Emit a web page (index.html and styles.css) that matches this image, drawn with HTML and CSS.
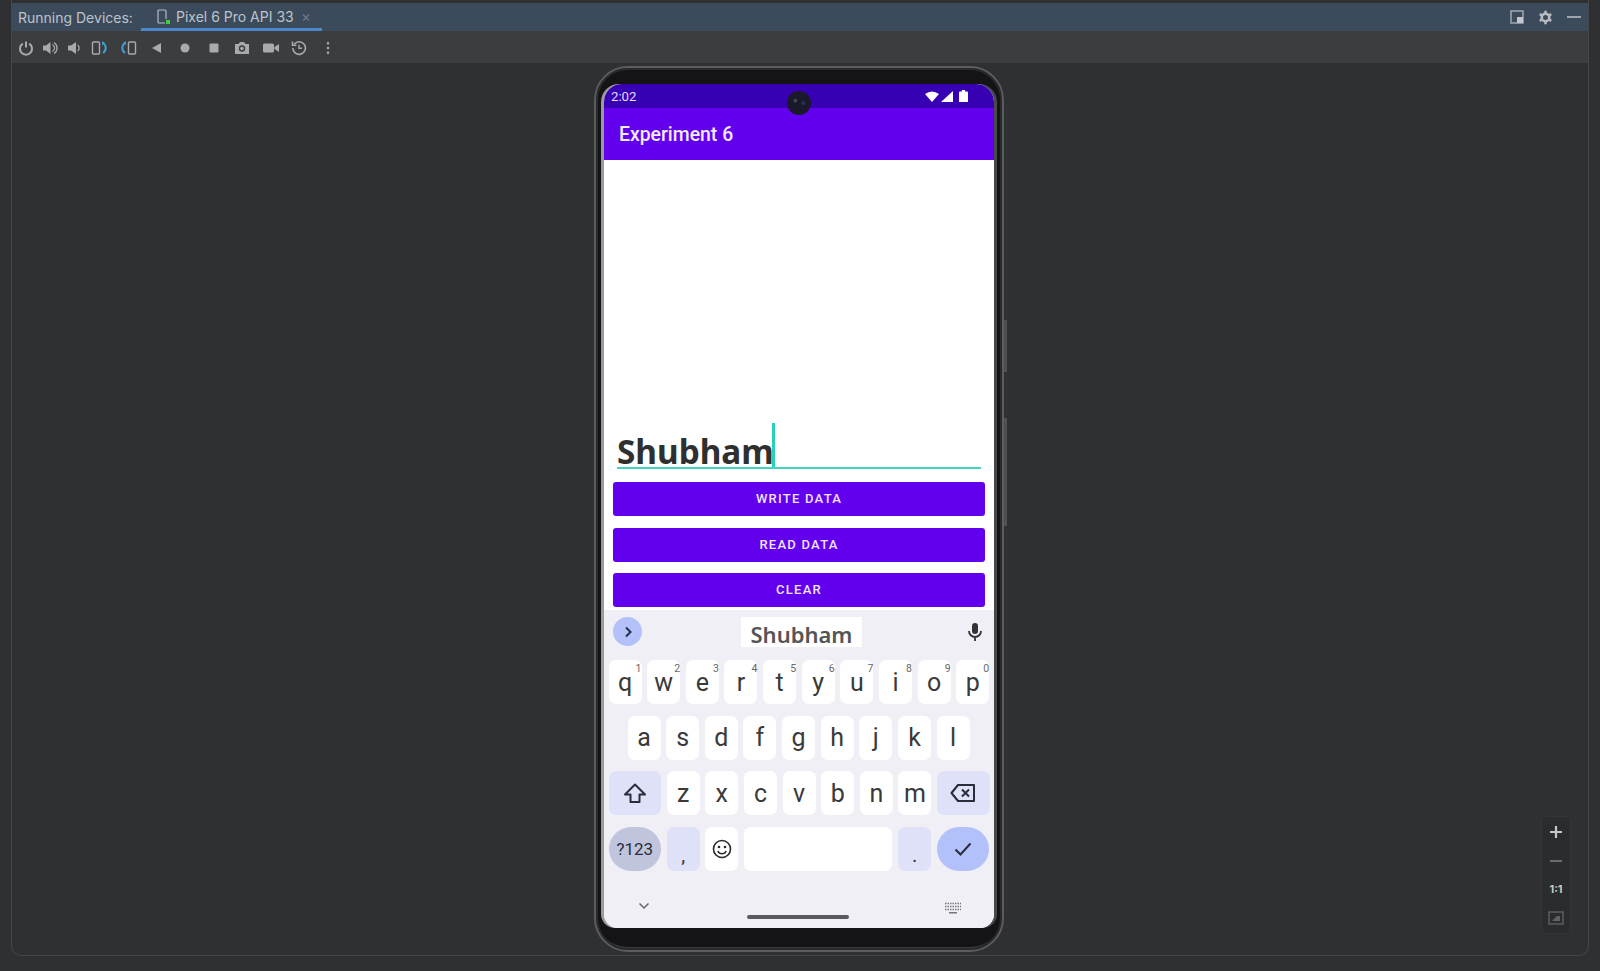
FILE: index.html
```html
<!DOCTYPE html>
<html lang="en">
<head>
  <meta charset="UTF-8">
  <title>Running Devices</title>
  <link rel="stylesheet" href="styles.css">
</head>
<body>

<div class="window">
  <div class="tabbar">
    <span class="tabbar-title">Running Devices:</span>
    <div class="tab">
      <svg class="tab-icon" width="14" height="16" viewBox="0 0 14 16">
        <rect x="1" y="1" width="8" height="13" rx="1" fill="none" stroke="#b4bcc4" stroke-width="1.2"/>
        <rect x="8" y="10" width="5" height="5" fill="#3c4b5c"/>
        <rect x="9" y="11" width="4" height="4" fill="#3fd03f"/>
      </svg>
      <span class="tab-label">Pixel 6 Pro API 33</span>
      <span class="tab-close">×</span>
    </div>
    <div class="tabbar-actions">
      <svg width="14" height="14" viewBox="0 0 14 14">
        <rect x="1" y="1" width="12" height="12" fill="none" stroke="#a9b0b6" stroke-width="1.4"/>
        <rect x="7" y="7" width="6" height="6" fill="#c4c8cc"/>
      </svg>
      <svg width="15" height="15" viewBox="0 0 15 15">
        <circle cx="7.5" cy="7.5" r="3.8" fill="none" stroke="#b9bdc1" stroke-width="2.6"/>
        <path d="M7.5 0.8v2.4M7.5 11.8v2.4M1.7 4.1l2.1 1.2M11.2 9.7l2.1 1.2M1.7 10.9l2.1-1.2M11.2 5.3l2.1-1.2" stroke="#b9bdc1" stroke-width="2.4"/>
      </svg>
      <svg width="14" height="14" viewBox="0 0 14 14">
        <path d="M0 7h14" stroke="#b9bdc1" stroke-width="1.6"/>
      </svg>
    </div>
  </div>

  <div class="toolbar">
    <span class="tool tool-narrow"><svg width="16" height="16" viewBox="0 0 16 16"><path d="M8 1.500v6" stroke="#a8abae" stroke-width="2" fill="none"/><path d="M4.800 3.600a6 6 0 1 0 6.400 0" stroke="#a8abae" stroke-width="2" fill="none"/></svg></span>
    <span class="tool tool-narrow"><svg width="16" height="16" viewBox="0 0 16 16"><path d="M1 5.500h3L8.500 2v12L4 10.500H1z" fill="#a8abae"/><path d="M10.500 4.500a4 4 0 0 1 0 7M12 2.500a6.500 6.500 0 0 1 0 11" stroke="#a8abae" stroke-width="1.300" fill="none"/></svg></span>
    <span class="tool tool-narrow"><svg width="16" height="16" viewBox="0 0 16 16"><path d="M2 5.500h3L10 2v12l-5-3.500H2z" fill="#a8abae"/><path d="M11.500 5a3.500 3.500 0 0 1 0 6" stroke="#a8abae" stroke-width="1.300" fill="none"/></svg></span>
    <span class="tool tool-rotate"><svg width="18" height="16" viewBox="0 0 18 16"><rect x="1.500" y="2" width="7" height="12" rx="1" fill="none" stroke="#a8abae" stroke-width="1.400"/><path d="M12 3a6 6 0 0 1 0 10" stroke="#3f9fd0" stroke-width="2" fill="none"/><path d="M11 1l3 2-3 2z" fill="#3f9fd0"/></svg></span>
    <span class="tool"><svg width="18" height="16" viewBox="0 0 18 16"><path d="M6 3a6 6 0 0 0 0 10" stroke="#3f9fd0" stroke-width="2" fill="none"/><path d="M7 1L4 3l3 2z" fill="#3f9fd0"/><rect x="9.500" y="2" width="7" height="12" rx="1" fill="none" stroke="#a8abae" stroke-width="1.400"/></svg></span>
    <span class="tool"><svg width="16" height="16" viewBox="0 0 16 16"><path d="M3 8l9-5v10z" fill="#a8abae"/></svg></span>
    <span class="tool"><svg width="16" height="16" viewBox="0 0 16 16"><circle cx="8" cy="8" r="4.500" fill="#a8abae"/></svg></span>
    <span class="tool"><svg width="16" height="16" viewBox="0 0 16 16"><rect x="3.500" y="3.500" width="9" height="9" rx="1" fill="#a8abae"/></svg></span>
    <span class="tool"><svg width="16" height="16" viewBox="0 0 16 16"><path d="M1 4h3.500L6 2h4l1.500 2H15v10H1z" fill="#a8abae"/><circle cx="8" cy="8.500" r="3.200" fill="#3b3d3f"/><circle cx="8" cy="8.500" r="1.800" fill="#a8abae"/></svg></span>
    <span class="tool"><svg width="18" height="16" viewBox="0 0 18 16"><rect x="1" y="3.500" width="11" height="9" rx="1.500" fill="#a8abae"/><path d="M12.500 7l4.500-3v8l-4.500-3z" fill="#a8abae"/></svg></span>
    <span class="tool"><svg width="16" height="16" viewBox="0 0 16 16"><path d="M3.300 4a6.300 6.300 0 1 1-1.500 4" stroke="#a8abae" stroke-width="1.600" fill="none"/><path d="M1.500 1.500v3.800h3.800" stroke="#a8abae" stroke-width="1.600" fill="none"/><path d="M8 4.800v3.500h3" stroke="#a8abae" stroke-width="1.400" fill="none"/></svg></span>
    <span class="tool"><svg width="16" height="16" viewBox="0 0 16 16"><rect x="6.800" y="2" width="2.400" height="2.400" rx="1" fill="#a8abae"/><rect x="6.800" y="6.800" width="2.400" height="2.400" rx="1" fill="#a8abae"/><rect x="6.800" y="11.600" width="2.400" height="2.400" rx="1" fill="#a8abae"/></svg></span>
  </div>

  <div class="stage">
    <div class="phone">
      <span class="side-btn side-btn-power"></span>
      <span class="side-btn side-btn-volume"></span>
      <div class="screen">
        <div class="statusbar">
          <span class="clock">2:02</span>
          <span class="camera"></span>
          <div class="status-icons">
            <svg width="14" height="11" viewBox="0 0 14 11"><path d="M0 3Q7-2 14 3L7 11z" fill="#fff"/></svg>
            <svg width="12" height="11" viewBox="0 0 12 11"><path d="M12 0v11H0z" fill="#fff"/></svg>
            <svg width="9" height="12" viewBox="0 0 9 12"><path d="M3 0h3v1.500h2a1 1 0 0 1 1 1V12H0V2.500a1 1 0 0 1 1-1h2z" fill="#fff"/></svg>
          </div>
        </div>
        <div class="appbar">Experiment 6</div>

        <div class="content">
          <div class="field"><span class="field-text">Shubham</span><span class="caret"></span></div>
          <button class="btn">WRITE DATA</button>
          <button class="btn">READ DATA</button>
          <button class="btn">CLEAR</button>
        </div>

        <div class="keyboard">
          <div class="suggestions">
            <span class="expand"><svg width="12" height="12" viewBox="0 0 12 12"><path d="M4 1.500L8.500 6 4 10.500" stroke="#2b2d45" stroke-width="2" fill="none"/></svg></span>
            <span class="suggestion">Shubham</span>
            <svg class="mic" width="16" height="20" viewBox="0 0 16 20"><rect x="5" y="1" width="6" height="11" rx="3" fill="#333"/><path d="M2 9a6 6 0 0 0 12 0M8 15v4" stroke="#333" stroke-width="1.800" fill="none"/></svg>
          </div>

          <div class="keys">
            <div class="key-row">
              <span class="key">q<sup>1</sup></span>
              <span class="key">w<sup>2</sup></span>
              <span class="key">e<sup>3</sup></span>
              <span class="key">r<sup>4</sup></span>
              <span class="key">t<sup>5</sup></span>
              <span class="key">y<sup>6</sup></span>
              <span class="key">u<sup>7</sup></span>
              <span class="key">i<sup>8</sup></span>
              <span class="key">o<sup>9</sup></span>
              <span class="key">p<sup>0</sup></span>
            </div>
            <div class="key-row key-row-home">
              <span class="key">a</span>
              <span class="key">s</span>
              <span class="key">d</span>
              <span class="key">f</span>
              <span class="key">g</span>
              <span class="key">h</span>
              <span class="key">j</span>
              <span class="key">k</span>
              <span class="key">l</span>
            </div>
            <div class="key-row">
              <span class="key key-wide key-mod"><svg width="24" height="24" viewBox="0 0 24 24"><path d="M12 3.500L22 13.500h-5.500V21h-9v-7.500H2z" fill="none" stroke="#2a2c3a" stroke-width="2" stroke-linejoin="round"/></svg></span>
              <span class="key">z</span>
              <span class="key">x</span>
              <span class="key">c</span>
              <span class="key">v</span>
              <span class="key">b</span>
              <span class="key">n</span>
              <span class="key">m</span>
              <span class="key key-wide key-mod"><svg width="26" height="20" viewBox="0 0 26 20"><path d="M8 2h16v16H8L1.500 10z" fill="none" stroke="#2a2c3a" stroke-width="2" stroke-linejoin="round"/><path d="M12 6.500l7 7M19 6.500l-7 7" stroke="#2a2c3a" stroke-width="2"/></svg></span>
            </div>
            <div class="key-row">
              <span class="key key-wide key-symbols">?123</span>
              <span class="key key-mod key-punct">,</span>
              <span class="key"><svg width="20" height="20" viewBox="0 0 20 20"><circle cx="10" cy="10" r="8.500" fill="none" stroke="#2a2a2a" stroke-width="1.600"/><circle cx="7" cy="8" r="1.300" fill="#2a2a2a"/><circle cx="13" cy="8" r="1.300" fill="#2a2a2a"/><path d="M5.800 12a4.600 4.600 0 0 0 8.400 0" stroke="#2a2a2a" stroke-width="1.500" fill="none"/></svg></span>
              <span class="key key-space"></span>
              <span class="key key-mod key-punct">.</span>
              <span class="key key-wide key-enter"><svg width="18" height="14" viewBox="0 0 18 14"><path d="M1.500 7.500L6.500 12.500 16.500 1.500" stroke="#2a2c3a" stroke-width="2" fill="none"/></svg></span>
            </div>
          </div>

          <div class="navbar">
            <svg width="12" height="8" viewBox="0 0 12 8"><path d="M1.500 1.500L6 6l4.500-4.500" stroke="#666" stroke-width="1.500" fill="none"/></svg>
            <svg width="16" height="12" viewBox="0 0 16 12"><path d="M0 1.500h16M0 4.500h16M0 7.500h16" stroke="#777" stroke-width="1.500" stroke-dasharray="1.500 1"/><path d="M4 10.800h8" stroke="#777" stroke-width="1.500"/></svg>
            <span class="home-bar"></span>
          </div>
        </div>
      </div>
    </div>

    <div class="zoom-panel">
      <svg width="14" height="14" viewBox="0 0 14 14"><path d="M7 1v12M1 7h12" stroke="#c4c6c8" stroke-width="2.200"/></svg>
      <svg width="14" height="14" viewBox="0 0 14 14"><path d="M1 7h12" stroke="#6a6d70" stroke-width="2"/></svg>
      <span class="zoom-ratio">1:1</span>
      <svg width="16" height="14" viewBox="0 0 16 14"><rect x="1" y="1" width="14" height="12" fill="none" stroke="#5f6265" stroke-width="1.400"/><path d="M4 10l5-5h3v5z" fill="#5f6265"/></svg>
    </div>
  </div>
</div>

</body>
</html>
```

FILE: styles.css
```css
* {
  box-sizing: border-box;
}
body {
  margin: 0;
  height: 971px;
  overflow: hidden;
  background: #2e3032;
  font-family: Roboto, "Liberation Sans", sans-serif;
}
.window {
  height: 956px;
  margin: 0 11px;
  padding-top: 3px;
  display: flex;
  flex-direction: column;
  border-left: 1px solid #45484a;
  border-right: 1px solid #45484a;
  border-bottom: 1px solid #45484a;
  border-radius: 0 0 10px 10px;
}

/* tool window header */
.tabbar {
  height: 28px;
  flex-shrink: 0;
  display: flex;
  align-items: center;
  padding-left: 6px;
  background: #3c4b5c;
  color: #bcc3cb;
  font-family: Inter, sans-serif;
  font-size: 14px;
}
.tabbar-title {
  width: 123px;
  white-space: nowrap;
}
.tab {
  width: 181px;
  height: 28px;
  display: flex;
  align-items: center;
  padding: 2px 0 0 16px;
  border-bottom: 3px solid #4a88c7;
}
.tab-icon {
  margin-right: 5px;
}
.tab-label {
  width: 125px;
  white-space: nowrap;
}
.tab-close {
  color: #6d7884;
  font-size: 15px;
}
.tabbar-actions {
  margin-left: auto;
  display: flex;
  align-items: center;
  gap: 14px;
  padding-right: 7px;
}

.toolbar {
  height: 32px;
  flex-shrink: 0;
  display: flex;
  align-items: center;
  padding: 1px 0 0 2px;
  background: #3b3d3f;
}
.tool {
  width: 28.5px;
  display: flex;
  justify-content: center;
}
.tool-narrow {
  width: 24px;
}
.tool-rotate {
  width: 28px;
}

.stage {
  flex: 1;
  position: relative;
  display: flex;
  justify-content: center;
  padding: 3px 2px 0 0;
}

/* device */
.phone {
  position: relative;
  width: 410px;
  height: 886px;
  padding: 16px 8px 0;
  background: #141416;
  border: 2px solid #5a5c5e;
  border-radius: 34px;
  box-shadow: inset 0 0 0 2px #2a2a2c, inset 0 -6px 0 -3px #3a3b3d;
}
.side-btn {
  position: absolute;
  right: -5px;
  width: 3px;
  background: #4d4f51;
}
.side-btn-power {
  top: 252px;
  height: 52px;
}
.side-btn-volume {
  top: 350px;
  height: 108px;
}
.screen {
  height: 844px;
  display: flex;
  flex-direction: column;
  overflow: hidden;
  border-radius: 18px 18px 14px 14px;
  background: #fff;
  box-shadow: -3px 0 0 #9a9b9d, 3px 0 0 #48494b;
}

.statusbar {
  position: relative;
  height: 24px;
  flex-shrink: 0;
  display: flex;
  align-items: center;
  justify-content: space-between;
  padding: 0 26px 0 7px;
  background: #3700b3;
}
.clock {
  color: #e6dcff;
  font-size: 13.2px;
}
.camera {
  position: absolute;
  left: 183px;
  top: 7px;
  width: 24px;
  height: 24px;
  border-radius: 50%;
  background: radial-gradient(circle at 68% 50%, #1d3a55 0, #0d0d16 14%), radial-gradient(circle at 35% 40%, #555 0, #0d0d16 12%);
  background-blend-mode: screen;
  z-index: 1;
}
.status-icons {
  display: flex;
  align-items: center;
  gap: 2px;
}
.status-icons svg:last-child {
  margin-left: 4px;
}
.appbar {
  height: 52px;
  flex-shrink: 0;
  display: flex;
  align-items: center;
  padding-left: 15px;
  background: #6200ee;
  color: #f3eaff;
  font-size: 19.4px;
  font-weight: 500;
}

.content {
  height: 450px;
  flex-shrink: 0;
  display: flex;
  flex-direction: column;
  justify-content: flex-end;
  padding: 0 9px 3px;
}
.field {
  position: relative;
  margin: 0 4px 13px;
  height: 44px;
  border-bottom: 2px solid #3ed6c0;
  display: flex;
  align-items: flex-end;
}
.field-text {
  color: #2f2f2f;
  font-family: "Noto Sans", sans-serif;
  font-size: 33.3px;
  font-weight: 700;
  line-height: 44px;
  margin-bottom: -6px;
}
.caret {
  width: 3px;
  height: 44px;
  margin-left: -2px;
  background: #2bcfbb;
}
.btn {
  height: 34px;
  margin-bottom: 11.5px;
  padding: 0 0 1px;
  border: 0;
  border-radius: 3px;
  background: #6200ee;
  color: #f0e4ff;
  font-family: Roboto, sans-serif;
  font-size: 13px;
  font-weight: 500;
  letter-spacing: 1.25px;
}
.btn:last-child {
  margin-bottom: 0;
}

/* keyboard */
.keyboard {
  position: relative;
  flex: 1;
  display: flex;
  flex-direction: column;
  background: #f0eff5;
}
.suggestions {
  position: relative;
  height: 50px;
  flex-shrink: 0;
  display: flex;
  align-items: flex-start;
  justify-content: space-between;
  padding: 7px 11px 0 9px;
}
.expand {
  width: 29px;
  height: 29px;
  border-radius: 50%;
  background: #b3c1fb;
  display: flex;
  align-items: center;
  justify-content: center;
}
.suggestion {
  width: 121px;
  height: 30px;
  margin-right: 6px;
  background: #fff;
  color: #555;
  font-family: "Noto Sans", sans-serif;
  font-size: 22px;
  font-weight: 600;
  line-height: 34px;
  text-align: center;
}
.mic {
  margin-top: 5px;
}
.keys {
  display: flex;
  flex-direction: column;
  gap: 11.7px;
  padding-left: 4.5px;
}
.key-row {
  display: flex;
  gap: 5.65px;
}
.key-row-home {
  padding-left: 19px;
}
.key {
  position: relative;
  width: 33px;
  height: 44px;
  flex-shrink: 0;
  display: flex;
  align-items: center;
  justify-content: center;
  background: #fff;
  border-radius: 7px;
  color: #3a3a3a;
  font-size: 25px;
}
.key sup {
  position: absolute;
  top: 3px;
  right: 0;
  color: #666;
  font-size: 10.5px;
  line-height: 12px;
}
.key-wide {
  width: 52.5px;
}
.key-mod {
  background: #dfe1f8;
}
.key-punct {
  font-size: 20px;
  padding-top: 12px;
}
.key-symbols {
  background: #c0c5dd;
  border-radius: 22px;
  color: #2a2c3a;
  font-size: 17px;
}
.key-enter {
  background: #b3c1fb;
  border-radius: 22px;
}
.key-space {
  width: 148.5px;
}
.navbar {
  flex: 1;
  display: flex;
  align-items: flex-start;
  justify-content: space-between;
  padding: 31px 33px 0 34px;
}
.home-bar {
  position: absolute;
  left: 143px;
  bottom: 9px;
  width: 102px;
  height: 4px;
  border-radius: 2px;
  background: #5a5a5e;
}

/* emulator zoom controls */
.zoom-panel {
  position: absolute;
  right: 17px;
  bottom: 21px;
  width: 30px;
  height: 118px;
  display: flex;
  flex-direction: column;
  align-items: center;
  gap: 14.6px;
  padding-top: 8px;
  background: #2a2c2e;
  border: 1px solid #333537;
  border-radius: 5px;
}
.zoom-ratio {
  height: 14px;
  color: #c4c6c8;
  font-family: Inter, sans-serif;
  font-size: 11px;
  font-weight: 700;
  line-height: 14px;
}
```
